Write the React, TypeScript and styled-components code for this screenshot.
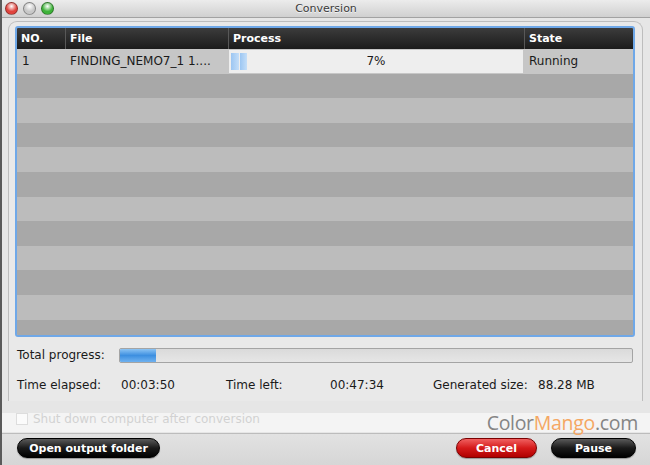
import React from 'react'
import styled, { createGlobalStyle, css } from 'styled-components'

const GlobalStyle = createGlobalStyle`
  html, body {
    margin: 0;
    padding: 0;
    background: #e4e4e4;
  }
  body {
    font-family: "DejaVu Sans", "Liberation Sans", sans-serif;
    font-size: 12px;
    color: #1a1a1a;
  }
`

const Window = styled.div`
  position: relative;
  width: 650px;
  height: 465px;
  overflow: hidden;
  display: flex;
  flex-direction: column;
  background: #e6e6e6;
  border-left: 2px solid #5a5a5a;
  box-sizing: border-box;
`

const TitleBar = styled.div`
  height: 17px;
  flex: none;
  display: flex;
  align-items: center;
  position: relative;
  background: linear-gradient(#ececec, #d0d0d0);
  border-bottom: 1px solid #a2a2a2;
`

const Lights = styled.div`
  display: flex;
  gap: 5px;
  padding-left: 3px;
`

const Light = styled.span<{ $color: string }>`
  width: 13px;
  height: 13px;
  border-radius: 50%;
  box-sizing: border-box;
  border: 1px solid rgba(0, 0, 0, 0.35);
  background: radial-gradient(circle at 50% 30%, #fff 0, ${p => p.$color} 55%);
`

const Title = styled.div`
  position: absolute;
  left: 0;
  right: 0;
  text-align: center;
  font-size: 11px;
  color: #3a3a3a;
  text-shadow: 0 1px 0 #f4f4f4;
`

const Panel = styled.div`
  margin: 3px 7px 0 6px;
  height: 380px;
  flex: none;
  box-sizing: border-box;
  border: 1px solid #bdbdbd;
  border-bottom: none;
  border-radius: 9px 9px 0 0;
  background: #e9e9e9;
  padding: 4px 7px 0 6px;
  display: flex;
  flex-direction: column;
`

const TableFrame = styled.div`
  height: 311px;
  box-sizing: border-box;
  border: 2px solid #6fa8e8;
  border-radius: 3px;
  display: flex;
  flex-direction: column;
  overflow: hidden;
  background: #bcbcbc;
`

const cols = '48px 163px 296px 1fr'

const HeaderRow = styled.div`
  height: 21px;
  flex: none;
  display: grid;
  grid-template-columns: ${cols};
  background: linear-gradient(#3c3c3c, #1b1b1b);
  color: #fff;
  font-weight: bold;
  font-size: 11px;
`

const HeaderCell = styled.div<{ $first?: boolean }>`
  display: flex;
  align-items: center;
  padding-left: 4px;
  ${p => !p.$first && css`border-left: 1px solid #585858;`}
`

const Body = styled.div`
  flex: 1;
  overflow: hidden;
`

const Row = styled.div<{ $dark?: boolean; $active?: boolean }>`
  height: 24.6px;
  display: grid;
  grid-template-columns: ${cols};
  background: ${p => (p.$active ? '#c6c6c6' : p.$dark ? '#a8a8a8' : '#bcbcbc')};
`

const Cell = styled.div`
  display: flex;
  align-items: center;
  padding-left: 5px;
  white-space: nowrap;
  overflow: hidden;
`

const ProcessCell = styled.div`
  position: relative;
  margin: 1px;
  background: #eeeeee;
  display: flex;
  align-items: center;
  justify-content: center;
`

const MiniBar = styled.div`
  position: absolute;
  left: 2px;
  top: 3px;
  bottom: 3px;
  width: 16px;
  display: flex;
  gap: 1px;
`

const MiniSeg = styled.span`
  flex: 1;
  background: linear-gradient(90deg, #9cc6f2, #c4def8);
`

const ProgressRow = styled.div`
  display: flex;
  align-items: center;
  margin-top: 9px;
  height: 18px;
  padding-left: 2px;
`

const Label = styled.span<{ $w?: number }>`
  flex: none;
  width: ${p => (p.$w ? `${p.$w}px` : 'auto')};
`

const TotalBar = styled.div`
  flex: 1;
  height: 15px;
  box-sizing: border-box;
  border: 1px solid #a4a4a4;
  border-radius: 2px;
  background: linear-gradient(#dadada, #e6e6e6);
  overflow: hidden;
  margin-right: 2px;
`

const TotalFill = styled.div`
  height: 100%;
  background: linear-gradient(#8cc4f4, #3d8fe0 50%, #6fb2f0);
`

const StatsRow = styled.div`
  display: flex;
  align-items: center;
  margin-top: 12px;
  height: 18px;
  padding-left: 2px;
`

const CheckRow = styled.div`
  display: flex;
  align-items: center;
  gap: 5px;
  height: 18px;
  margin-top: 9px;
  padding-left: 14px;
  color: #9a9a9a;
`

const Check = styled.span`
  width: 12px;
  height: 12px;
  box-sizing: border-box;
  border: 1px solid #b4b4b4;
  background: #f6f6f6;
`

const Footer = styled.div`
  flex: 1;
  margin-top: 5px;
  border-top: 1px solid #bcbcbc;
  background: linear-gradient(#e2e2e2, #d6d6d6);
  display: flex;
  align-items: flex-start;
  padding: 4px 14px 0 15px;
  gap: 14px;
`

const Pill = styled.button<{ $red?: boolean; $w: number }>`
  width: ${p => p.$w}px;
  height: 20px;
  border-radius: 10px;
  border: 1px solid ${p => (p.$red ? '#7a0000' : '#000')};
  background: ${p =>
    p.$red
      ? 'linear-gradient(#f06060, #d51a1a 50%, #b00000)'
      : 'linear-gradient(#5a5a5a, #1a1a1a 50%, #000)'};
  color: #fff;
  font-family: "DejaVu Sans", "Liberation Sans", sans-serif;
  font-weight: bold;
  font-size: 11px;
  padding: 0;
  box-shadow: 0 1px 1px rgba(0, 0, 0, 0.3);
`

const Spacer = styled.div`
  flex: 1;
`

const Watermark = styled.div`
  position: absolute;
  left: 0;
  right: 0;
  top: 413px;
  height: 19px;
  background: rgba(255, 255, 255, 0.55);
  display: flex;
  align-items: center;
  justify-content: flex-end;
  padding-right: 12px;
  font-family: "Open Sans", "DejaVu Sans", sans-serif;
  font-size: 19.5px;
  color: #858585;
  letter-spacing: -0.3px;
`

const Mango = styled.span`
  color: #f5a763;
`

const rows = Array.from({ length: 12 }, (_, i) => i)

export default function App() {
  return (
    <>
      <GlobalStyle />
      <Window>
        <TitleBar>
          <Lights>
            <Light $color="#e0443e" />
            <Light $color="#c8c8c8" />
            <Light $color="#3fb33a" />
          </Lights>
          <Title>Conversion</Title>
        </TitleBar>

        <Panel>
          <TableFrame>
            <HeaderRow>
              <HeaderCell $first>NO.</HeaderCell>
              <HeaderCell>File</HeaderCell>
              <HeaderCell>Process</HeaderCell>
              <HeaderCell>State</HeaderCell>
            </HeaderRow>
            <Body>
              {rows.map(i =>
                i === 0 ? (
                  <Row key={i} $active>
                    <Cell>1</Cell>
                    <Cell>FINDING_NEMO7_1 1....</Cell>
                    <ProcessCell>
                      <MiniBar>
                        <MiniSeg />
                        <MiniSeg />
                      </MiniBar>
                      7%
                    </ProcessCell>
                    <Cell>Running</Cell>
                  </Row>
                ) : (
                  <Row key={i} $dark={i % 2 === 1} />
                )
              )}
            </Body>
          </TableFrame>

          <ProgressRow>
            <Label $w={102}>Total progress:</Label>
            <TotalBar>
              <TotalFill style={{ width: '7%' }} />
            </TotalBar>
          </ProgressRow>

          <StatsRow>
            <Label $w={104}>Time elapsed:</Label>
            <Label $w={105}>00:03:50</Label>
            <Label $w={104}>Time left:</Label>
            <Label $w={103}>00:47:34</Label>
            <Label $w={105}>Generated size:</Label>
            <Label>88.28 MB</Label>
          </StatsRow>
        </Panel>

        <CheckRow>
          <Check />
          Shut down computer after conversion
        </CheckRow>

        <Footer>
          <Pill $w={143}>Open output folder</Pill>
          <Spacer />
          <Pill $red $w={81}>Cancel</Pill>
          <Pill $w={85}>Pause</Pill>
        </Footer>

        <Watermark>
          Color<Mango>Mango</Mango>.com
        </Watermark>
      </Window>
    </>
  )
}
